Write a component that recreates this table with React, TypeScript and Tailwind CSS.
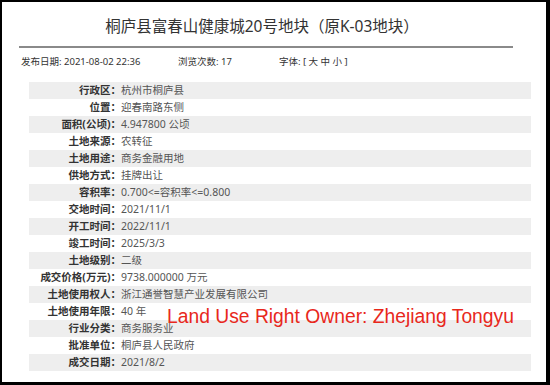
import React from 'react';

const rows: [string, string][] = [
  ['行政区', '杭州市桐庐县'],
  ['位置', '迎春南路东侧'],
  ['面积(公顷)', '4.947800 公顷'],
  ['土地来源', '农转征'],
  ['土地用途', '商务金融用地'],
  ['供地方式', '挂牌出让'],
  ['容积率', '0.700<=容积率<=0.800'],
  ['交地时间', '2021/11/1'],
  ['开工时间', '2022/11/1'],
  ['竣工时间', '2025/3/3'],
  ['土地级别', '二级'],
  ['成交价格(万元)', '9738.000000 万元'],
  ['土地使用权人', '浙江通誉智慧产业发展有限公司'],
  ['土地使用年限', '40 年'],
  ['行业分类', '商务服务业'],
  ['批准单位', '桐庐县人民政府'],
  ['成交日期', '2021/8/2'],
];

const cjk = { fontFamily: '"Noto Sans", "Noto Sans CJK SC", sans-serif' };

const App: React.FC = () => {
  return (
    <div
      className="relative w-[550px] h-[385px] overflow-hidden bg-white border-black border-t-2 border-l-2 border-r-4 border-b-[3px] text-[#333]"
      style={cjk}
    >
      {/* 标题 */}
      <div className="ml-[17px] w-[494px]">
        <h1 className="pt-[13px] pb-[9px] pr-[8px] text-center text-[15.5px] leading-[22px] font-normal text-[#333]">
          桐庐县富春山健康城20号地块（原K-03地块）
        </h1>
        <div className="h-[2px] bg-[#8a8a8a]" />
        <div className="mt-[6px] flex pl-[2px] text-[9.5px] leading-[16px] text-[#333]">
          <span className="w-[157px]">发布日期: 2021-08-02 22:36</span>
          <span className="w-[101px]">浏览次数: 17</span>
          <span>字体: [ 大 中 小 ]</span>
        </div>
      </div>

      {/* 地块信息表 */}
      <div className="mt-[12px] ml-[27px] w-[502px] text-[10.5px]">
        {rows.map(([label, value], i) => (
          <div
            key={label}
            className={`flex h-[17px] items-center ${i % 2 === 0 ? 'bg-[#eeeeee]' : 'bg-white'}`}
          >
            <span className="w-[92px] text-right font-bold text-[#333]">{label}：</span>
            <span className="text-[#555]">{value}</span>
          </div>
        ))}
      </div>

      {/* 红色注释 */}
      <div
        className="absolute left-[165px] top-[303px] text-[19.3px] leading-[24px] text-[#e8281c]"
        style={{ fontFamily: '"Liberation Sans", Arial, sans-serif' }}
      >
        Land Use Right Owner: Zhejiang Tongyu
      </div>
    </div>
  );
};

export default App;
